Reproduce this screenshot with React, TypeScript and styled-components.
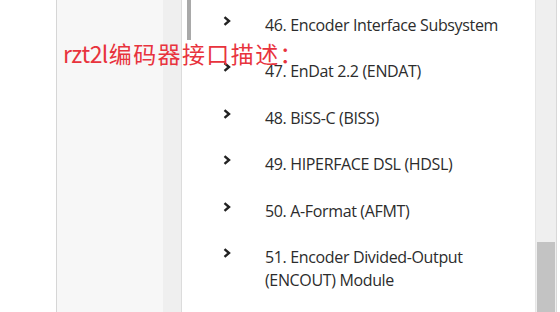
import React from "react";
import styled, { createGlobalStyle } from "styled-components";

const items = [
  ["46. Encoder Interface Subsystem"],
  ["47. EnDat 2.2 (ENDAT)"],
  ["48. BiSS-C (BISS)"],
  ["49. HIPERFACE DSL (HDSL)"],
  ["50. A-Format (AFMT)"],
  ["51. Encoder Divided-Output", "(ENCOUT) Module"],
];

const Chevron = () => (
  <svg width="8" height="10" viewBox="0 0 8 10">
    <path d="M1.5 1.2 L6 5 L1.5 8.8" fill="none" stroke="#222" strokeWidth="2.4" strokeLinejoin="miter" />
  </svg>
);

const App: React.FC = () => {
  return (
    <>
      <Global />
      <Page>
        <Blank />
        <SideNav />
        <SideStrip />
        <NavScroll>
          <NavThumb />
        </NavScroll>
        <Main>
          <List>
            {items.map((lines, i) => (
              <Row key={i}>
                <Icon>
                  <Chevron />
                </Icon>
                <Label>
                  {lines.map((l, j) => (
                    <div key={j}>{l}</div>
                  ))}
                </Label>
              </Row>
            ))}
          </List>
        </Main>
        <Track>
          <Thumb />
        </Track>
        <Edge />
        <Note>
          <Latin>rzt2l</Latin>编码器接口描述：
        </Note>
      </Page>
    </>
  );
};

export default App;

const Global = createGlobalStyle`
  html, body {
    margin: 0;
    padding: 0;
    background: #fff;
    overflow: hidden;
  }
`;

const Page = styled.div`
  position: relative;
  display: flex;
  width: 560px;
  height: 312px;
  overflow: hidden;
  font-family: "Open Sans", "Noto Sans", sans-serif;
`;

const Blank = styled.div`
  width: 56px;
  flex: none;
  background: #fff;
`;

const SideNav = styled.div`
  width: 106px;
  flex: none;
  background: #f7f7f7;
  border-left: 1px solid #d6d6d6;
`;

const SideStrip = styled.div`
  width: 18px;
  flex: none;
  background: #efefef;
  border-right: 1px solid #dcdcdc;
`;

const NavScroll = styled.div`
  width: 9px;
  flex: none;
  padding-left: 5px;
  box-sizing: border-box;
`;

const NavThumb = styled.div`
  width: 4px;
  height: 40px;
  background: #a9a9a9;
`;

const Main = styled.div`
  flex: 1;
  background: #fff;
`;

const List = styled.div`
  padding-top: 2px;
  padding-left: 32px;
`;

const Row = styled.div`
  display: flex;
  align-items: flex-start;
  padding: 11.75px 0;
`;

const Icon = styled.div`
  width: 42px;
  flex: none;
  padding-top: 2px;
  display: flex;
`;

const Label = styled.div`
  font-size: 16px;
  line-height: 23px;
  color: #2c2c2c;
  letter-spacing: -0.35px;
`;

const Track = styled.div`
  width: 18px;
  flex: none;
  background: #efefef;
  border-left: 1px solid #e6e6e6;
  display: flex;
  flex-direction: column;
  justify-content: flex-end;
  padding: 0 1px;
`;

const Thumb = styled.div`
  height: 70px;
  background: #c3c3c3;
`;

const Edge = styled.div`
  width: 3px;
  flex: none;
  border-left: 1px solid #d8d8d8;
  background: #fff;
`;

const Note = styled.div`
  position: absolute;
  left: 63px;
  top: 38px;
  font-family: "Noto Sans CJK SC", "Noto Sans", sans-serif;
  font-size: 23px;
  line-height: 30px;
  letter-spacing: 1.4px;
  color: #e8333d;
  white-space: nowrap;
`;

const Latin = styled.span`
  letter-spacing: -0.6px;
  margin-right: 1px;
`;
